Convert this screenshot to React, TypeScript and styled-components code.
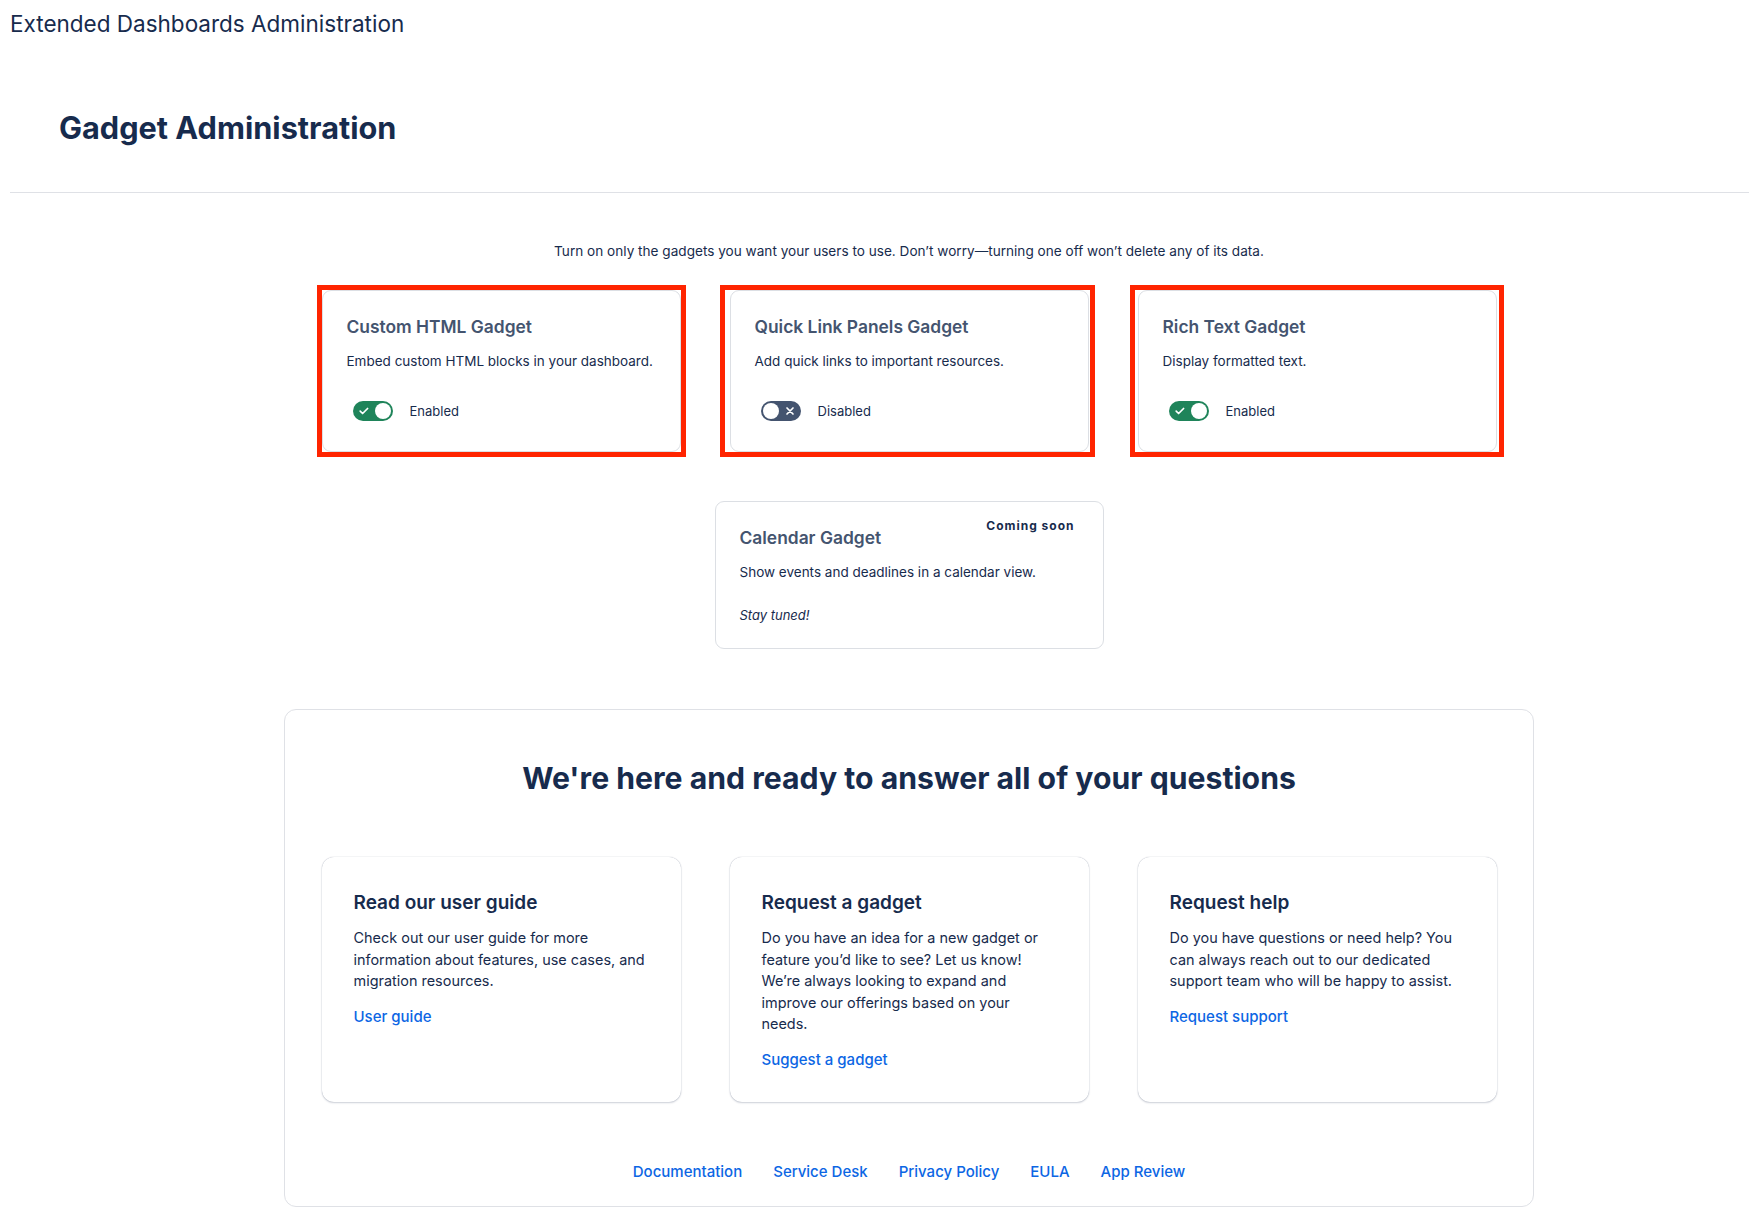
import styled, { createGlobalStyle } from "styled-components";

const GlobalStyle = createGlobalStyle`
  body {
    margin: 0;
    background: #ffffff;
    color: #172b4d;
    font-family: Inter, "Noto Sans", "Liberation Sans", sans-serif;
  }
`;

const Page = styled.div`
  padding-left: 10px;
`;

const AppTitle = styled.div`
  padding-top: 10px;
  font-size: 22.5px;
  line-height: 28px;
  font-weight: 400;
  color: #172b4d;
`;

const PageHeader = styled.header`
  padding: 70px 0 44px 49px;
  border-bottom: 1px solid #dfe1e6;
`;

const PageHeading = styled.h1`
  margin: 0;
  font-size: 30.7px;
  line-height: 40px;
  font-weight: 700;
  color: #172b4d;
`;

const Main = styled.main`
  padding-left: 59px;
  display: flex;
  flex-direction: column;
  align-items: center;
`;

const Intro = styled.p`
  margin: 48px 0 29px;
  font-size: 13.6px;
  line-height: 20px;
  color: #172b4d;
`;

const CardGrid = styled.div`
  display: grid;
  grid-template-columns: repeat(3, 359px);
  gap: 49px;
  justify-content: center;
`;

// red review frame drawn around a gadget card; left/right say how far it sits out
const HighlightFrame = styled.div<{ $left: number; $right: number }>`
  margin: -5px ${(p) => -p.$right}px -5px ${(p) => -p.$left}px;
  padding: 0 ${(p) => p.$right - 5}px 0 ${(p) => p.$left - 5}px;
  border: 5px solid #ff2400;
  display: flex;
  flex-direction: column;
`;

const GadgetCard = styled.section<{ $width?: number }>`
  position: relative;
  box-sizing: border-box;
  width: ${(p) => (p.$width ? `${p.$width}px` : "auto")};
  padding: 24px 20px 24px 24px;
  border: 1px solid #dcdfe4;
  border-radius: 9px;
  background: #fff;
`;

const CalendarCard = styled(GadgetCard)`
  margin-top: 49px;
`;

const GadgetTitle = styled.h3`
  margin: 0;
  font-size: 17.4px;
  line-height: 24px;
  font-weight: 600;
  color: #44546f;
`;

const GadgetText = styled.p`
  margin: 12px 0 0;
  font-size: 13.5px;
  line-height: 20px;
  color: #172b4d;
`;

const ToggleRow = styled.div`
  margin-top: 24px;
  height: 32px;
  display: flex;
  align-items: center;
  gap: 17px;
  padding-left: 6px;
  font-size: 13px;
  color: #172b4d;
`;

const ToggleTrack = styled.span<{ $on: boolean }>`
  position: relative;
  width: 40px;
  height: 20px;
  border-radius: 10px;
  background: ${(p) => (p.$on ? "#1f845a" : "#44546f")};
  display: inline-flex;
  align-items: center;
  justify-content: ${(p) => (p.$on ? "flex-start" : "flex-end")};
  padding: 0 5px;
  box-sizing: border-box;
`;

const ToggleKnob = styled.span<{ $on: boolean }>`
  position: absolute;
  top: 2px;
  ${(p) => (p.$on ? "right: 2px;" : "left: 2px;")}
  width: 16px;
  height: 16px;
  border-radius: 50%;
  background: #ffffff;
`;

const Badge = styled.span`
  position: absolute;
  top: 16px;
  right: 28px;
  font-size: 12px;
  line-height: 16px;
  font-weight: 700;
  letter-spacing: 1px;
  color: #172b4d;
`;

const Note = styled.p`
  margin: 24px 0 0;
  font-size: 13px;
  line-height: 18px;
  font-style: italic;
  color: #172b4d;
`;

const SupportPanel = styled.section`
  box-sizing: border-box;
  width: 1250px;
  margin-top: 60px;
  padding: 48px 37px 24px;
  border: 1px solid #dfe1e6;
  border-radius: 12px;
  display: flex;
  flex-direction: column;
  align-items: center;
`;

const SupportHeading = styled.h2`
  margin: 0 0 59px;
  font-size: 30.2px;
  line-height: 40px;
  font-weight: 700;
  color: #172b4d;
`;

const HelpCard = styled.div`
  padding: 32px;
  border-radius: 12px;
  background: #fff;
  box-shadow: 0 1px 2px rgba(9, 30, 66, 0.18), 0 0 1px rgba(9, 30, 66, 0.35);
`;

const HelpTitle = styled.h3`
  margin: 0;
  font-size: 19px;
  line-height: 28px;
  font-weight: 600;
  color: #172b4d;
`;

const HelpText = styled.p`
  margin: 10px 0 14px;
  font-size: 14.45px;
  line-height: 21.6px;
  color: #172b4d;
`;

const Link = styled.a`
  font-size: 15px;
  line-height: 20px;
  font-weight: 500;
  color: #0c66e4;
  text-decoration: none;
`;

const FooterLinks = styled.nav`
  margin-top: 60px;
  display: flex;
  gap: 31px;
`;

function CheckIcon() {
  return (
    <svg width="12" height="12" viewBox="0 0 12 12" fill="none">
      <path
        d="M2.2 6.2l2.4 2.3 5-5"
        stroke="#fff"
        strokeWidth="1.7"
        strokeLinecap="round"
        strokeLinejoin="round"
      />
    </svg>
  );
}

function CrossIcon() {
  return (
    <svg width="12" height="12" viewBox="0 0 12 12" fill="none">
      <path
        d="M3 3l6 6M9 3l-6 6"
        stroke="#fff"
        strokeWidth="1.7"
        strokeLinecap="round"
      />
    </svg>
  );
}

function Toggle({ on }: { on: boolean }) {
  return (
    <ToggleTrack $on={on} role="switch" aria-checked={on}>
      {on ? <CheckIcon /> : <CrossIcon />}
      <ToggleKnob $on={on} />
    </ToggleTrack>
  );
}

const gadgets = [
  {
    title: "Custom HTML Gadget",
    text: "Embed custom HTML blocks in your dashboard.",
    enabled: true,
    frame: [5, 5],
  },
  {
    title: "Quick Link Panels Gadget",
    text: "Add quick links to important resources.",
    enabled: false,
    frame: [10, 6],
  },
  {
    title: "Rich Text Gadget",
    text: "Display formatted text.",
    enabled: true,
    frame: [8, 7],
  },
];

const helpItems = [
  {
    title: "Read our user guide",
    text: "Check out our user guide for more information about features, use cases, and migration resources.",
    link: "User guide",
  },
  {
    title: "Request a gadget",
    text: "Do you have an idea for a new gadget or feature you’d like to see? Let us know! We’re always looking to expand and improve our offerings based on your needs.",
    link: "Suggest a gadget",
  },
  {
    title: "Request help",
    text: "Do you have questions or need help? You can always reach out to our dedicated support team who will be happy to assist.",
    link: "Request support",
  },
];

const footer = ["Documentation", "Service Desk", "Privacy Policy", "EULA", "App Review"];

export default function App() {
  return (
    <>
      <GlobalStyle />
      <Page>
        <AppTitle>Extended Dashboards Administration</AppTitle>
        <PageHeader>
          <PageHeading>Gadget Administration</PageHeading>
        </PageHeader>
        <Main>
          <Intro>
            Turn on only the gadgets you want your users to use. Don’t
            worry—turning one off won’t delete any of its data.
          </Intro>
          <CardGrid>
            {gadgets.map((g) => (
              <HighlightFrame key={g.title} $left={g.frame[0]} $right={g.frame[1]}>
                <GadgetCard>
                  <GadgetTitle>{g.title}</GadgetTitle>
                  <GadgetText>{g.text}</GadgetText>
                  <ToggleRow>
                    <Toggle on={g.enabled} />
                    {g.enabled ? "Enabled" : "Disabled"}
                  </ToggleRow>
                </GadgetCard>
              </HighlightFrame>
            ))}
          </CardGrid>
          <CalendarCard $width={389}>
            <Badge>Coming soon</Badge>
            <GadgetTitle>Calendar Gadget</GadgetTitle>
            <GadgetText>Show events and deadlines in a calendar view.</GadgetText>
            <Note>Stay tuned!</Note>
          </CalendarCard>
          <SupportPanel>
            <SupportHeading>
              We're here and ready to answer all of your questions
            </SupportHeading>
            <CardGrid>
              {helpItems.map((h) => (
                <HelpCard key={h.title}>
                  <HelpTitle>{h.title}</HelpTitle>
                  <HelpText>{h.text}</HelpText>
                  <Link href="#">{h.link}</Link>
                </HelpCard>
              ))}
            </CardGrid>
            <FooterLinks>
              {footer.map((f) => (
                <Link key={f} href="#">
                  {f}
                </Link>
              ))}
            </FooterLinks>
          </SupportPanel>
        </Main>
      </Page>
    </>
  );
}
